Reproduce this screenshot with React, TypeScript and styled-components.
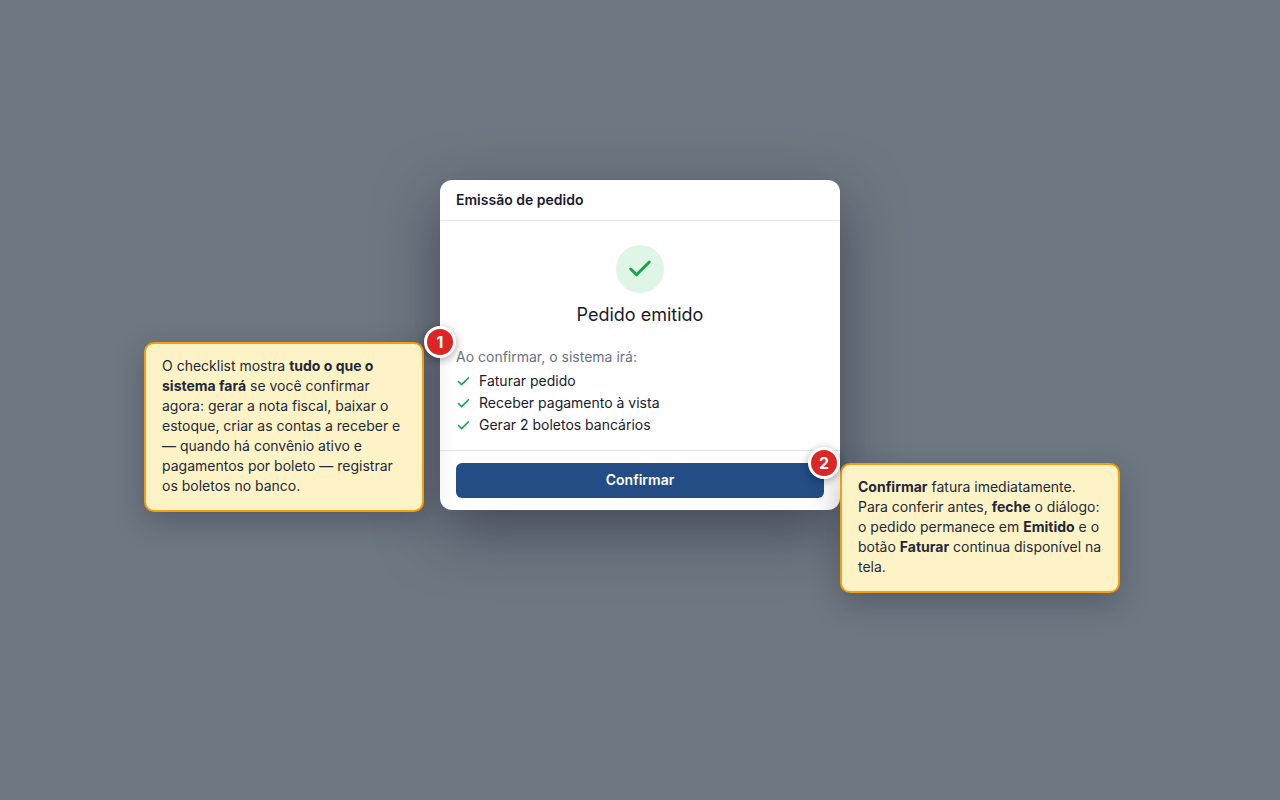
import React from "react";
import styled, { createGlobalStyle } from "styled-components";

const GlobalStyle = createGlobalStyle`
  *, *::before, *::after { box-sizing: border-box; }
  body {
    margin: 0;
    background: #6e7882;
    color: #1a1a2e;
    font-family: Inter, "Liberation Sans", sans-serif;
    font-size: 14px;
  }
`;

const Backdrop = styled.main`
  display: flex;
  justify-content: center;
  align-items: flex-start;
  min-height: 100vh;
  padding: 180px 16px 48px;
`;

const Stage = styled.div`
  position: relative;
  width: 100%;
  max-width: 400px;
`;

const Dialog = styled.section`
  background: #fff;
  border-radius: 12px;
  box-shadow: 0 20px 60px rgba(26, 26, 46, 0.5);
`;

const Header = styled.header`
  padding: 10px 16px;
  border-bottom: 1px solid #e5e7eb;
`;

const Heading = styled.h1`
  margin: 0;
  font-size: 14px;
  font-weight: 600;
  line-height: 20px;
`;

const Body = styled.div`
  padding: 24px 16px 14px;
`;

const Result = styled.div`
  display: flex;
  flex-direction: column;
  align-items: center;
  gap: 8px;
  margin-bottom: 18px;
`;

const StatusCircle = styled.span`
  display: grid;
  place-items: center;
  width: 48px;
  height: 48px;
  border-radius: 50%;
  background: #dff6e7;
`;

const ResultTitle = styled.h2`
  margin: 0;
  font-size: 18px;
  font-weight: 400;
  line-height: 28px;
`;

const Intro = styled.p`
  margin: 0 0 3px;
  color: #6b7280;
  line-height: 20px;
`;

const Steps = styled.ul`
  margin: 0;
  padding: 0;
  list-style: none;
`;

const Step = styled.li`
  display: flex;
  align-items: center;
  gap: 8px;
  line-height: 22px;
`;

const CheckSvg = styled.svg`
  flex: none;
  fill: none;
  stroke: #16a34a;
  stroke-linecap: round;
  stroke-linejoin: round;
`;

const Footer = styled.footer`
  padding: 12px 16px;
  border-top: 1px solid #e5e7eb;
`;

const ConfirmButton = styled.button`
  display: block;
  width: 100%;
  height: 35px;
  padding: 0 16px 2px;
  border: 0;
  border-radius: 6px;
  background: #244d85;
  color: #fff;
  font: inherit;
  font-weight: 600;
  cursor: pointer;
`;

/* Zero-sized anchor pinned to the dialog point that an annotation explains. */
const Pin = styled.div<{ $x: string; $y: number }>`
  position: absolute;
  left: ${(p) => p.$x};
  top: ${(p) => p.$y}px;
`;

const Badge = styled.span`
  position: absolute;
  left: -16px;
  top: -16px;
  display: grid;
  place-items: center;
  width: 32px;
  height: 32px;
  border: 3px solid #fff;
  border-radius: 50%;
  background: #dc2626;
  box-shadow: 0 2px 8px rgba(0, 0, 0, 0.35);
  color: #fff;
  font-size: 16px;
  font-weight: 700;
  line-height: 20px;
`;

const Callout = styled.p<{ $side: "left" | "right" }>`
  position: absolute;
  top: 0;
  ${(p) => (p.$side === "left" ? "right" : "left")}: 16px;
  width: 280px;
  margin: 0;
  padding: 12px 16px 14px;
  border: 2px solid #f59e0b;
  border-radius: 10px;
  background: #fef3c7;
  box-shadow: 0 10px 30px rgba(26, 26, 46, 0.3);
  color: #1f2937;
  line-height: 20px;
`;

function Check({ size, weight }: { size: number; weight: number }) {
  return (
    <CheckSvg width={size} height={size} viewBox="0 0 24 24" strokeWidth={weight} aria-hidden="true">
      <path d="M20 6 9 17l-5-5" />
    </CheckSvg>
  );
}

function Annotation({
  n,
  x,
  y,
  side,
  children,
}: {
  n: number;
  x: string;
  y: number;
  side: "left" | "right";
  children: React.ReactNode;
}) {
  return (
    <Pin $x={x} $y={y}>
      <Callout $side={side}>{children}</Callout>
      <Badge>{n}</Badge>
    </Pin>
  );
}

const steps = ["Faturar pedido", "Receber pagamento à vista", "Gerar 2 boletos bancários"];

export default function App() {
  return (
    <>
      <GlobalStyle />
      <Backdrop>
        <Stage>
          <Dialog role="dialog" aria-labelledby="dialog-title">
            <Header>
              <Heading id="dialog-title">Emissão de pedido</Heading>
            </Header>
            <Body>
              <Result>
                <StatusCircle>
                  <Check size={28} weight={2.5} />
                </StatusCircle>
                <ResultTitle>Pedido emitido</ResultTitle>
              </Result>
              <Intro>Ao confirmar, o sistema irá:</Intro>
              <Steps>
                {steps.map((step) => (
                  <Step key={step}>
                    <Check size={15} weight={2.5} />
                    {step}
                  </Step>
                ))}
              </Steps>
            </Body>
            <Footer>
              <ConfirmButton type="button">Confirmar</ConfirmButton>
            </Footer>
          </Dialog>
          <Annotation n={1} x="0px" y={162} side="left">
            O checklist mostra <strong>tudo o que o sistema fará</strong> se você confirmar agora: gerar a nota
            fiscal, baixar o estoque, criar as contas a receber e — quando há convênio ativo e pagamentos por
            boleto — registrar os boletos no banco.
          </Annotation>
          <Annotation n={2} x="calc(100% - 16px)" y={283} side="right">
            <strong>Confirmar</strong> fatura imediatamente. Para conferir antes, <strong>feche</strong> o
            diálogo: o pedido permanece em <strong>Emitido</strong> e o botão <strong>Faturar</strong> continua
            disponível na tela.
          </Annotation>
        </Stage>
      </Backdrop>
    </>
  );
}
